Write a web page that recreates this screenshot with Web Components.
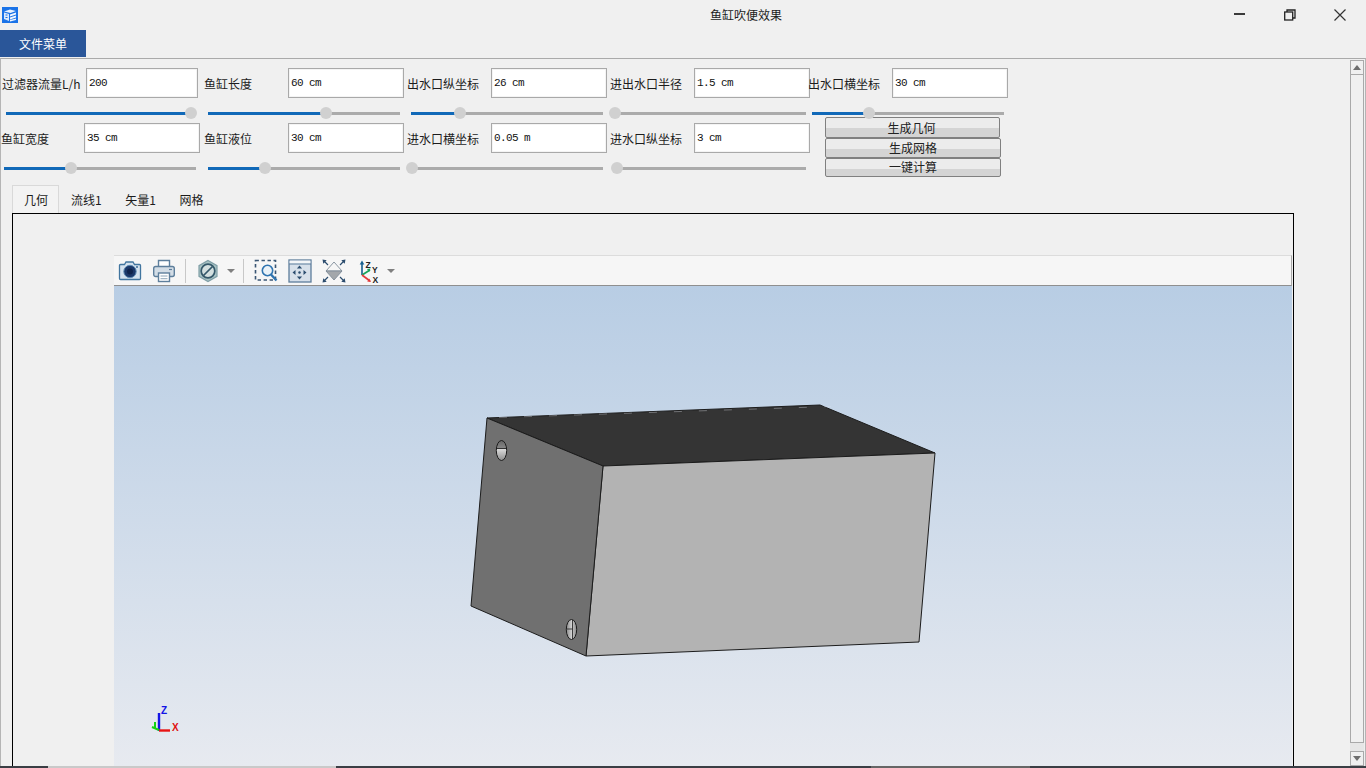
<!DOCTYPE html>
<html lang="zh">
<head>
<meta charset="utf-8">
<title>鱼缸吹便效果</title>
<style>
  html, body { margin: 0; height: 100%; overflow: hidden; background: #f0f0f0; }
  body { font: 12px "Noto Sans CJK SC", "Liberation Sans", sans-serif; color: #1c1c1c; }
</style>
</head>
<body>
<app-window>
  <title-bar slot="title" caption="鱼缸吹便效果"></title-bar>
  <menu-bar slot="menu" caption="文件菜单"></menu-bar>

  <param-panel slot="params">
    <param-field label="过滤器流量L/h" value="200" label-width="85" label-pad="1" input-width="112" slider="5 190 185"></param-field>
    <param-field label="鱼缸长度" value="60 cm" label-width="84" input-width="116" slider="4 192 118"></param-field>
    <param-field label="出水口纵坐标" value="26 cm" label-width="84" input-width="116" slider="4 192 49"></param-field>
    <param-field label="进出水口半径" value="1.5 cm" label-width="84" input-width="116" slider="0 196 5"></param-field>
    <param-field label="出水口横坐标" value="30 cm" label-width="84" input-width="116" slider="4 192 57"></param-field>

    <param-field label="鱼缸宽度" value="35 cm" label-width="83" input-width="116" slider="3 192 67"></param-field>
    <param-field label="鱼缸液位" value="30 cm" label-width="84" input-width="116" slider="4 192 57"></param-field>
    <param-field label="进水口横坐标" value="0.05 m" label-width="84" input-width="116" slider="0 196 5"></param-field>
    <param-field label="进水口纵坐标" value="3 cm" label-width="84" input-width="116" slider="2 194 5"></param-field>
    <action-stack>
      <action-button style="width:175px;height:21px;line-height:19px;padding-right:2px">生成几何</action-button>
      <action-button style="width:176px;height:20px;line-height:17px">生成网格</action-button>
      <action-button style="width:176px;height:19px;line-height:16px">一键计算</action-button>
    </action-stack>
  </param-panel>

  <tab-strip slot="tabs" tabs="几何,流线1,矢量1,网格"></tab-strip>
  <cad-viewer slot="pane"></cad-viewer>
  <scroll-bar slot="scroll"></scroll-bar>
  <task-strip slot="bottom"></task-strip>
</app-window>

<script>
// shared helper, every element just sets its own shadow markup
class Base extends HTMLElement {
  render(html) {
    if (!this.shadowRoot) this.attachShadow({ mode: 'open' });
    this.shadowRoot.innerHTML = html;
  }
}

class AppWindow extends Base {
  connectedCallback() {
    this.render(`
      <style>
        :host { display: flex; flex-direction: column; width: 1366px; height: 768px; }
        .frame { flex: 1; min-height: 0; display: flex; box-sizing: border-box;
                 border-top: 1px solid #aaa; border-left: 1px solid #b5b5b5; border-right: 1px solid #b5b5b5; margin-top: 1px; }
        .main { width: 1349px; flex: none; display: flex; flex-direction: column; min-height: 0; }
      </style>
      <slot name="title"></slot>
      <slot name="menu"></slot>
      <div class="frame">
        <div class="main">
          <slot name="params"></slot>
          <slot name="tabs"></slot>
          <slot name="pane"></slot>
        </div>
        <slot name="scroll"></slot>
      </div>
      <slot name="bottom"></slot>
    `);
  }
}

class TitleBar extends Base {
  connectedCallback() {
    this.render(`
      <style>
        :host { display: flex; align-items: center; height: 30px; flex: none; }
        .logo { width: 16px; height: 16px; margin-left: 2px; display: block; }
        .caption { margin-left: 692px; line-height: 30px; }
        .controls { margin-left: auto; margin-right: 1px; display: flex; }
        .controls div { width: 50px; height: 30px; display: flex; align-items: center; justify-content: center; }
        svg { display: block; }
      </style>
      <svg class="logo" viewBox="0 0 16 16">
        <rect width="16" height="16" fill="#1a73e8"/>
        <path d="M2 4.5L8 2.5l6 1.5-5.5 2z" fill="#e9f2fd"/>
        <path d="M2 5.5l5 1.5v7l-5-2z" fill="#dbe9fb"/>
        <path d="M8 7.5l6-2v2l-6 2zM8 10.5l6-2v2l-6 2zM8 13l6-1.5v1.5l-6 1.5z" fill="#f2f7fe"/>
        <path d="M3.5 8h2M3.5 10.5h2" stroke="#1a73e8"/>
      </svg>
      <div class="caption">${this.getAttribute('caption')}</div>
      <div class="controls">
        <div><svg width="12" height="12"><rect x="0" y="4" width="11" height="2" fill="#3a3a3a"/></svg></div>
        <div><svg width="12" height="12" fill="none" stroke="#222" stroke-width="1.3"><rect x="0.7" y="3" width="8" height="8"/><path d="M3 3V1h8v8H9"/></svg></div>
        <div><svg width="12" height="12" stroke="#333" stroke-width="1.2"><path d="M0.5 0.5l11 11M11.5 0.5l-11 11"/></svg></div>
      </div>
    `);
  }
}

class MenuBar extends Base {
  connectedCallback() {
    this.render(`
      <style>
        :host { display: block; height: 27px; flex: none; }
        .btn { width: 86px; height: 27px; background: #2a5699; color: #fff; text-align: center; line-height: 28px; }
      </style>
      <div class="btn">${this.getAttribute('caption')}</div>
    `);
  }
}

class ParamPanel extends Base {
  connectedCallback() {
    this.render(`
      <style>
        :host { display: grid; flex: none; grid-template-columns: 203px 203px 203px 198px 200px;
                grid-auto-rows: 55px; padding-top: 9px; }
      </style>
      <slot></slot>
    `);
  }
}

class ParamField extends Base {
  connectedCallback() {
    const [inset, track, fill] = this.getAttribute('slider').split(' ').map(Number);
    const labelPad = this.getAttribute('label-pad') || 0;
    this.render(`
      <style>
        :host { display: block; width: 200px; }
        .top { display: flex; height: 30px; align-items: center; }
        .label { flex: none; box-sizing: border-box; width: ${this.getAttribute('label-width')}px; padding-left: ${labelPad}px; white-space: nowrap; }
        .input { flex: none; box-sizing: border-box; width: ${this.getAttribute('input-width')}px; height: 30px;
                 background: #fff; border: 1px solid #a9a9a9; box-shadow: inset 0 0 0 1px #f4f4f4;
                 padding: 0 2px; font: 11px/29px "Liberation Mono", "DejaVu Sans Mono", monospace; letter-spacing: -0.6px; color: #111; }
        .slider { display: flex; align-items: center; height: 12px; margin: 9px 0 0 ${inset}px; width: ${track}px; }
        .fill { flex: none; width: ${fill}px; height: 3px; background: #1169b8; }
        .knob { flex: none; width: 12px; height: 12px; margin: 0 -6px; border-radius: 50%; background: #d0d0d0; position: relative; }
        .rest { flex: 1; height: 3px; background: #ababab; }
      </style>
      <div class="top">
        <div class="label">${this.getAttribute('label')}</div>
        <div class="input">${this.getAttribute('value')}</div>
      </div>
      <div class="slider"><div class="fill"></div><div class="knob"></div><div class="rest"></div></div>
    `);
  }
}

class ActionStack extends Base {
  connectedCallback() {
    this.render(`
      <style>
        :host { display: flex; flex-direction: column; margin: -6px 0 0 17px; }
      </style>
      <slot></slot>
    `);
  }
}

class ActionButton extends Base {
  connectedCallback() {
    this.render(`
      <style>
        :host { display: block; box-sizing: border-box; border: 1px solid #808080; border-radius: 2px;
                background: linear-gradient(#ececec 0, #ececec 10px, #d4d4d4 10px, #d4d4d4 100%);
                text-align: center; color: #222; }
      </style>
      <slot></slot>
    `);
  }
}

class TabStrip extends Base {
  connectedCallback() {
    const tabs = this.getAttribute('tabs').split(',');
    this.render(`
      <style>
        :host { display: flex; flex: none; height: 28px; margin: 7px 0 0 11px; }
        .tab { box-sizing: border-box; height: 28px; padding: 0 11.6px 0 12px; line-height: 30px; white-space: nowrap; }
        .tab.on { padding: 0 10px 0 11px; border: 1px solid #d9d9d9; border-bottom: none; background: #f3f3f3; line-height: 28px; }
      </style>
      ${tabs.map((t, i) => `<div class="tab ${i === 0 ? 'on' : ''}">${t}</div>`).join('')}
    `);
  }
}

class CadViewer extends Base {
  connectedCallback() {
    this.render(`
      <style>
        :host { display: flex; flex-direction: column; flex: 1; min-height: 0; box-sizing: border-box; width: 1282px;
                margin-left: 11px; border: 1px solid #000; border-bottom: none; padding: 41px 0 0 101px; }
        cad-toolbar { flex: none; }
        .canvas { flex: 1; min-height: 0; width: 1178px; background: linear-gradient(#b8cde4, #e7eaf0); }
        svg { display: block; }
        text { font-family: "Liberation Sans", sans-serif; font-weight: 700; }
      </style>
      <cad-toolbar></cad-toolbar>
      <div class="canvas">
        <svg width="1178" height="480" viewBox="114 286 1178 480">
          <defs>
            <linearGradient id="h1" x1="0" y1="0" x2="0" y2="1">
              <stop offset="0" stop-color="#666"/><stop offset="0.42" stop-color="#8a8a8a"/>
              <stop offset="0.45" stop-color="#d8d8d8"/><stop offset="1" stop-color="#8e8e8e"/>
            </linearGradient>
            <linearGradient id="h2" x1="0" y1="0" x2="1" y2="0">
              <stop offset="0" stop-color="#8a8a8a"/><stop offset="0.5" stop-color="#cfcfcf"/>
              <stop offset="1" stop-color="#8a8a8a"/>
            </linearGradient>
          </defs>
          <g stroke="#1c1c1c" stroke-width="1" stroke-linejoin="round">
            <polygon points="487,418 820,405 935,453 603,466" fill="#343434"/>
            <polygon points="603,466 935,453 919,642 586,656" fill="#b3b3b3"/>
            <polygon points="487,418 603,466 586,656 471,606" fill="#707070"/>
            <ellipse cx="501.5" cy="450.5" rx="5.2" ry="10" fill="url(#h1)"/>
            <path d="M496.5 448.5h10" stroke-width="0.8"/>
            <ellipse cx="571.5" cy="629.5" rx="5.2" ry="10" fill="url(#h2)"/>
            <path d="M566.5 629h6M572.5 620v19" stroke-width="0.8"/>
          </g>
          <path d="M499 417.5l332 -11" stroke="#dfe4ea" stroke-width="0.6" stroke-opacity="0.6" stroke-dasharray="8 17"/>
          <!-- orientation triad -->
          <path d="M159 731V713" stroke="#1414e6" stroke-width="2.4"/>
          <path d="M159 730.5h11" stroke="#e81414" stroke-width="2.4"/>
          <path d="M159 730l-7 -3M155 729v-7" stroke="#14d214" stroke-width="2"/>
          <text x="161" y="714" font-size="10" fill="#1414e6">Z</text>
          <text x="172" y="731" font-size="10" fill="#e01010">X</text>
        </svg>
      </div>
    `);
  }
}

class CadToolbar extends Base {
  connectedCallback() {
    this.render(`
      <style>
        :host { display: flex; align-items: center; box-sizing: border-box; width: 1178px; height: 31px;
                padding-left: 4px; background: #f6f6f6; border-top: 1px solid #dcdcdc;
                border-right: 1px solid #aaa; border-bottom: 1px solid #8f8f8f; }
        svg { display: block; flex: none; width: 24px; height: 24px; }
        .sep { flex: none; width: 1px; height: 24px; background: #c8c8c8; }
        .caret { flex: none; width: 0; height: 0; border: 4px solid transparent; border-top: 4px solid #808080; border-bottom: none; }
      </style>
      <svg viewBox="0 0 24 24">
        <path d="M2.5 5.5h4l1.5-2.5h7l1.5 2.5h5a1 1 0 0 1 1 1v13a1 1 0 0 1-1 1h-19a1 1 0 0 1-1-1v-13a1 1 0 0 1 1-1z" fill="#d5e2ee" stroke="#41759f" stroke-width="1.3"/>
        <circle cx="12" cy="12.5" r="6.2" fill="#1b3768" stroke="#5f8cb5" stroke-width="1"/>
        <circle cx="12" cy="12.5" r="3" fill="#10244c"/>
        <circle cx="19" cy="8" r="1" fill="#3a6a96"/>
      </svg>
      <svg viewBox="0 0 24 24" style="margin-left:10px">
        <path d="M6.5 8V1.5h11V8" fill="#fff" stroke="#5e7f9c" stroke-width="1.4"/>
        <rect x="1.7" y="7.5" width="20.6" height="10" rx="2" fill="#d3dde6" stroke="#5e7f9c" stroke-width="1.4"/>
        <path d="M17 10.5h3" stroke="#5e7f9c" stroke-width="1.2"/>
        <rect x="6.5" y="14" width="11" height="8.5" fill="#fff" stroke="#5e7f9c" stroke-width="1.4"/>
        <path d="M8.5 17h7M8.5 19.7h7" stroke="#8ea5b8" stroke-width="1"/>
      </svg>
      <div class="sep" style="margin-left:9px"></div>
      <svg viewBox="0 0 24 24" style="margin-left:10px">
        <polygon points="12,1.5 21,6.7 21,17.3 12,22.5 3,17.3 3,6.7" fill="#a9c3c4" stroke="#7f9ea6" stroke-width="1.2"/>
        <circle cx="12" cy="12" r="6.8" fill="#d4e0e0" stroke="#34586a" stroke-width="1.7"/>
        <path d="M7.5 16.5l9-9" stroke="#34586a" stroke-width="1.7"/>
      </svg>
      <div class="caret" style="margin-left:7px"></div>
      <div class="sep" style="margin-left:8px"></div>
      <svg viewBox="0 0 24 24" style="margin-left:10px">
        <rect x="1.5" y="1.5" width="20" height="19.5" fill="none" stroke="#3a5674" stroke-width="1.6" stroke-dasharray="3.4 2.6"/>
        <circle cx="13.5" cy="11.5" r="5.2" fill="#eaf2f8" stroke="#2f74b0" stroke-width="1.6"/>
        <path d="M17 15.5l5.5 6" stroke="#2f74b0" stroke-width="2.4"/>
      </svg>
      <svg viewBox="0 0 24 24" style="margin-left:10px">
        <rect x="1" y="1" width="22" height="22" fill="#d7e0ea" stroke="#5d7d9b" stroke-width="1.3"/>
        <rect x="1.6" y="1.6" width="20.8" height="3" fill="#f4f6f8"/>
        <path d="M1 5h22" stroke="#5d7d9b" stroke-width="1"/>
        <path d="M11.5 6.5l2.6 3h-5.2zM11.5 20.5l2.6-3h-5.2zM4.5 13.5l3-2.6v5.2zM18.5 13.5l-3-2.6v5.2z" fill="#2b4c6e"/>
        <circle cx="11.5" cy="13.5" r="1.2" fill="#2b4c6e"/>
      </svg>
      <svg viewBox="0 0 24 24" style="margin-left:10px">
        <polygon points="12,3 20,12 4,12" fill="#f6f6f6" stroke="#7f8c99" stroke-width="0.9"/>
        <polygon points="4,12 20,12 12,21" fill="#a3a7ab" stroke="#7f8c99" stroke-width="0.9"/>
        <path d="M0.5 0.5l4.2 0.8-3.4 3.4zM23.5 0.5l-4.2 0.8 3.4 3.4zM0.5 23.5l4.2-0.8-3.4-3.4zM23.5 23.5l-4.2-0.8 3.4-3.4z" fill="#2b4c6e"/>
        <path d="M2.5 2.5l3.5 3.5M21.5 2.5l-3.5 3.5M2.5 21.5l3.5-3.5M21.5 21.5l-3.5-3.5" stroke="#2b4c6e" stroke-width="1.2"/>
      </svg>
      <svg viewBox="0 0 24 24" style="margin-left:12px">
        <path d="M4 16V5" stroke="#17608f" stroke-width="1.6"/>
        <path d="M4 1.5l-2.3 4h4.6z" fill="#17608f"/>
        <path d="M4 16l8-5" stroke="#16a35a" stroke-width="1.7"/>
        <path d="M12.5 9.5l-3.5 0.6 2 3z" fill="#16a35a"/>
        <path d="M4 16l8 6" stroke="#e23b3b" stroke-width="1.7"/>
        <path d="M13 23l-3.8-0.6 2-2.8z" fill="#e23b3b"/>
        <text x="7.5" y="8.5" font-size="8.5" font-family="Liberation Sans" font-weight="700" fill="#222">Z</text>
        <text x="14" y="13.5" font-size="8.5" font-family="Liberation Sans" font-weight="700" fill="#222">Y</text>
        <text x="14.5" y="23.5" font-size="8.5" font-family="Liberation Sans" font-weight="700" fill="#222">X</text>
      </svg>
      <div class="caret" style="margin-left:5px"></div>
    `);
  }
}

class ScrollBar extends Base {
  connectedCallback() {
    this.render(`
      <style>
        :host { display: flex; flex-direction: column; flex: none; width: 14px; padding-top: 1px; margin-right: 1px; }
        .btn { flex: none; box-sizing: border-box; height: 15px; border: 1px solid #a9a9a9; background: #f0f0f0;
               display: flex; align-items: center; justify-content: center; }
        .up { width: 0; height: 0; border: 4px solid transparent; border-bottom: 5px solid #6e6e6e; border-top: none; }
        .down { width: 0; height: 0; border: 4px solid transparent; border-top: 5px solid #6e6e6e; border-bottom: none; }
        .thumb { flex: none; box-sizing: border-box; height: 668px; border: 1px solid #a9a9a9; border-top: none; background: #f0f0f0; }
        .track { flex: 1; background: #e6e6e6; }
      </style>
      <div class="btn"><div class="up"></div></div>
      <div class="thumb"></div>
      <div class="track"></div>
      <div class="btn"><div class="down"></div></div>
    `);
  }
}

class TaskStrip extends Base {
  connectedCallback() {
    this.render(`
      <style>
        :host { display: flex; flex: none; height: 2px; background: #3a3e44; }
        .light { margin-left: 48px; width: 288px; background: #c9c9c9; }
        .mid { margin-left: 535px; width: 159px; background: #666; }
      </style>
      <div class="light"></div><div class="mid"></div>
    `);
  }
}

customElements.define('app-window', AppWindow);
customElements.define('title-bar', TitleBar);
customElements.define('menu-bar', MenuBar);
customElements.define('param-panel', ParamPanel);
customElements.define('param-field', ParamField);
customElements.define('action-stack', ActionStack);
customElements.define('action-button', ActionButton);
customElements.define('tab-strip', TabStrip);
customElements.define('cad-toolbar', CadToolbar);
customElements.define('cad-viewer', CadViewer);
customElements.define('scroll-bar', ScrollBar);
customElements.define('task-strip', TaskStrip);
</script>
</body>
</html>
